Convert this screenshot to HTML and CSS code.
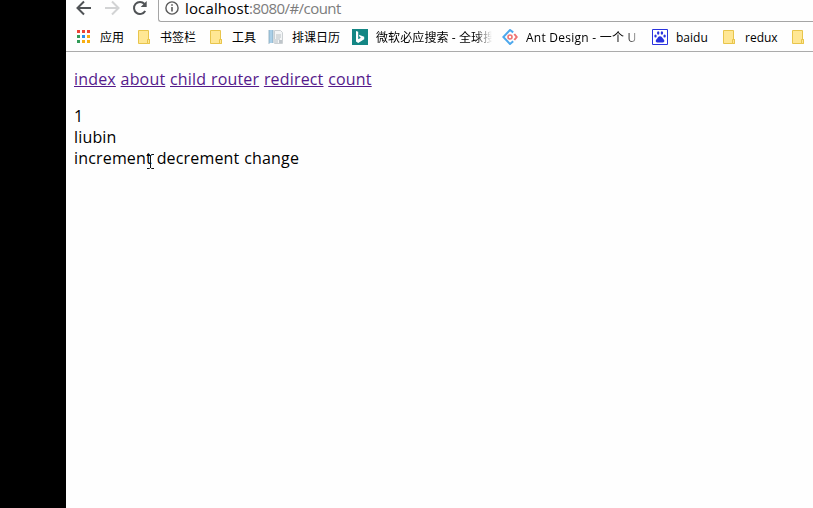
FILE: index.html
```html
<!DOCTYPE html>
<html lang="zh-CN">
<head>
<meta charset="utf-8">
<title>localhost:8080/#/count</title>
<link rel="stylesheet" href="styles.css">
</head>
<body>
<svg class="defs" width="0" height="0" aria-hidden="true">
  <symbol id="folder" viewBox="0 0 16 16"><path d="M2.5 1.5h10v9h1v4h-11z" fill="#ffe794" stroke="#e8c54c"/><path d="M11.5 14v-3.5h2v4h-2z" fill="#ffe794" stroke="#e8c54c"/></symbol>
</svg>
<div class="window">
  <header class="toolbar">
    <nav class="controls">
      <svg width="16" height="16" viewBox="0 0 16 16" fill="none" stroke="#505356" stroke-width="2"><path d="M15 8H2M8 1.5L1.5 8L8 14.5"/></svg>
      <svg width="16" height="16" viewBox="0 0 16 16" fill="none" stroke="#d2d3d4" stroke-width="2"><path d="M1 8h13M8 1.5L14.5 8L8 14.5"/></svg>
      <svg width="16" height="16" viewBox="0 0 16 16"><path d="M13.2 11A6 6 0 1 1 12.5 4" fill="none" stroke="#505356" stroke-width="2"/><path d="M14.7 1v6h-6z" fill="#505356"/></svg>
    </nav>
    <div class="address">
      <svg width="14" height="14" viewBox="0 0 14 14"><circle cx="7" cy="7" r="6.1" fill="none" stroke="#5a5a5a" stroke-width="1.4"/><path d="M7 6v4.5M7 3.2v1.6" stroke="#5a5a5a" stroke-width="1.6"/></svg>
      <span class="url"><span class="host">localhost</span><span class="path">:8080/#/count</span></span>
    </div>
  </header>
  <div class="bookmarks">
    <div class="item apps"><svg width="16" height="16" viewBox="0 0 16 16"><path d="M1 1h3v3H1zM6 1h3v3H6zM11 1h3v3h-3z" fill="#ed4436"/><path d="M1 6h3v3H1zM1 11h3v3H1z" fill="#319b57"/><path d="M6 6h3v3H6z" fill="#2a8ced"/><path d="M11 6h3v3h-3zM6 11h3v3H6zM11 11h3v3h-3z" fill="#f8ae12"/></svg><span>应用</span></div>
    <div class="item shelf"><svg width="16" height="16"><use href="#folder"/></svg><span>书签栏</span></div>
    <div class="item tools"><svg width="16" height="16"><use href="#folder"/></svg><span>工具</span></div>
    <div class="item calendar"><svg width="16" height="16" viewBox="0 0 16 16"><path d="M1 1h4v13H1z" fill="#a9cfe8"/><path d="M1 1v14M5 1v13" stroke="#7a9caf" stroke-width=".7"/><path d="M6.5 1.5h6l2 2v11h-8z" fill="#f3f5f6" stroke="#cbd0d3"/><path d="M8 6h5M8 8h5M8 10h4" stroke="#b8c0c4"/><path d="M5 10h5v4H5z" fill="#d4dade"/><path d="M11 11h3v3h-3z" fill="#bec5ca"/></svg><span>排课日历</span></div>
    <div class="item bing"><svg width="16" height="16" viewBox="0 0 16 16"><path d="M0 0h16v16H0z" fill="#138684"/><path d="M4 2l2.2.8v7.4L9 8.7 7.7 8 6.9 5.8l5.3 2v2.5L6.2 14 4 12.5z" fill="#fff"/></svg><span class="fade">微软必应搜索 - 全球搜</span></div>
    <div class="item ant"><svg width="16" height="16" viewBox="0 0 16 16" fill="none" stroke-width="2"><path d="M11.2 3.4L8 1 1.3 8 8 15l3.2-2.7" stroke="#4da8ed"/><path d="M12.3 5l2.4 3-2.4 3" stroke="#ee7474"/><circle cx="8" cy="8" r="2" stroke="#ee7474" stroke-width="1.6"/></svg><span class="fade">Ant Design - 一个 U</span></div>
    <div class="item baidu"><svg width="16" height="16" viewBox="0 0 16 16"><path d="M.5.5h15v15H.5z" fill="#fff" stroke="#2932df"/><g fill="#2932df"><ellipse cx="3.5" cy="7" rx="1.2" ry="1.6"/><ellipse cx="6.2" cy="4" rx="1.2" ry="1.7"/><ellipse cx="9.9" cy="4" rx="1.2" ry="1.7"/><ellipse cx="12.6" cy="7" rx="1.2" ry="1.6"/><path d="M8 7.2c1.8 0 2.3 1.8 3.7 3.2 1.6 1.9-.2 3.5-1.8 3H6.1c-1.8.5-3.3-1.1-1.8-2.9C5.8 9 6.2 7.2 8 7.2z"/></g></svg><span>baidu</span></div>
    <div class="item redux"><svg width="16" height="16"><use href="#folder"/></svg><span>redux</span></div>
    <div class="item"><svg width="16" height="16"><use href="#folder"/></svg></div>
  </div>
  <main class="page">
    <p class="links"><a href="#/">index</a> <a href="#/about">about</a> <a href="#/child">child router</a> <a href="#/redirect">redirect</a> <a href="#/count">count</a></p>
    <div>1</div>
    <div>liubin</div>
    <div class="actions"><span>increment</span> <span>decrement</span> <span>change</span></div>
  </main>
</div>
<svg class="cursor" width="9" height="17" viewBox="0 0 9 17" fill="none" stroke="#111"><path d="M1 1.5h2.5l1 1 1-1H8M4.5 2v13M1 15.5h2.5l1-1 1 1H8"/></svg>
</body>
</html>
```
FILE: styles.css
```css
* { box-sizing: border-box; }
body {
  margin: 0;
  height: 508px;
  padding-left: 66px;
  overflow: hidden;
  background: #000;
  color: #000;
  font-family: "Open Sans", "Noto Sans CJK SC", sans-serif;
}
svg { display: block; flex: none; }
.defs { position: absolute; }
.window { height: 508px; background: #fefefe; overflow: hidden; }
.toolbar { display: flex; height: 22px; }
.controls { display: flex; gap: 12px; width: 92px; padding-left: 10px; }
.address {
  display: flex;
  flex: 1;
  height: 22px;
  padding: 1px 0 0 6px;
  border: solid #a5a5a5;
  border-width: 0 0 1px 1px;
  border-bottom-left-radius: 3px;
}
.url { display: flex; margin-left: 6px; font-size: 15px; line-height: 14px; white-space: nowrap; }
.host { width: 64px; letter-spacing: 0.15px; }
.path { color: #7c7c7c; letter-spacing: -0.55px; }
.bookmarks {
  display: flex;
  height: 30px;
  padding: 7px 0 0 10px;
  border-bottom: 1px solid #ababab;
  font-size: 12px;
  line-height: 18px;
  white-space: nowrap;
}
.item { display: flex; flex: none; gap: 8px; }
.apps { width: 60px; }
.shelf { width: 72px; }
.tools { width: 60px; }
.calendar { width: 84px; }
.bing { width: 150px; }
.ant { width: 150px; }
.baidu { width: 69px; }
.redux { width: 69px; }
.fade {
  -webkit-mask-image: linear-gradient(to right, #000 86%, transparent);
  mask-image: linear-gradient(to right, #000 86%, transparent);
}
.bing .fade { width: 116px; letter-spacing: 0.1px; }
.ant .fade { width: 116px; letter-spacing: 0.25px; }
.page {
  padding: 17px 8px;
  font-size: 16px;
  line-height: 21px;
  letter-spacing: 0.17px;
  word-spacing: 0.4px;
}
.links { margin: 0 0 16px; }
a { color: #551a8b; text-underline-offset: 1px; text-decoration-thickness: 1px; text-decoration-skip-ink: none; }
.cursor { position: absolute; left: 146px; top: 153px; }
```
